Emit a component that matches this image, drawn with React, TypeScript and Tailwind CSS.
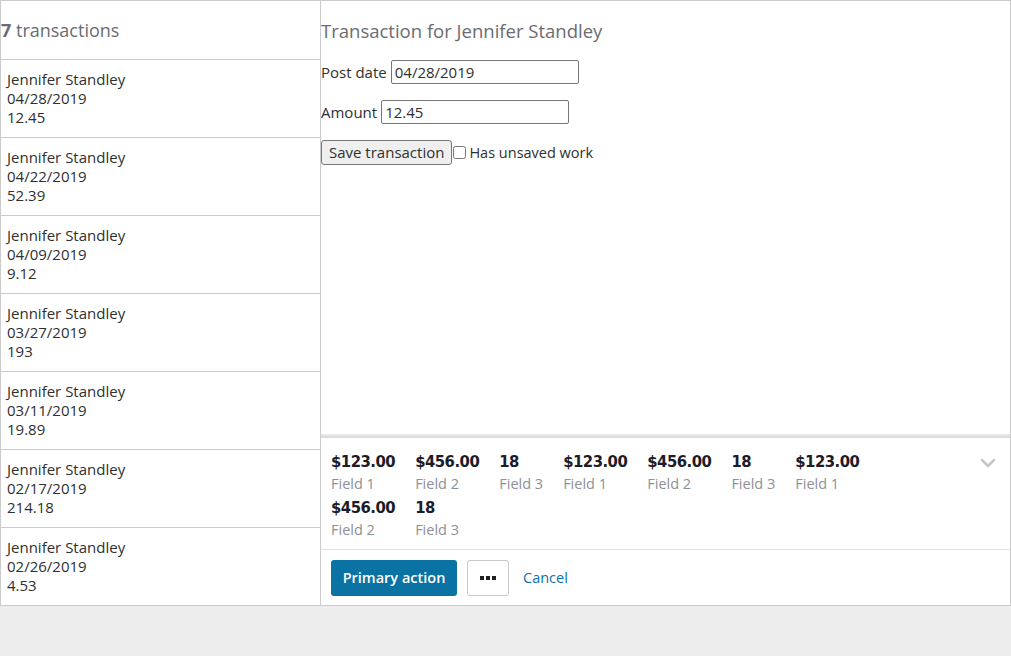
import React from 'react';

const transactions = [
  { name: 'Jennifer Standley', date: '04/28/2019', amount: '12.45' },
  { name: 'Jennifer Standley', date: '04/22/2019', amount: '52.39' },
  { name: 'Jennifer Standley', date: '04/09/2019', amount: '9.12' },
  { name: 'Jennifer Standley', date: '03/27/2019', amount: '193' },
  { name: 'Jennifer Standley', date: '03/11/2019', amount: '19.89' },
  { name: 'Jennifer Standley', date: '02/17/2019', amount: '214.18' },
  { name: 'Jennifer Standley', date: '02/26/2019', amount: '4.53' },
];

const summary = [
  { value: '$123.00', label: 'Field 1' },
  { value: '$456.00', label: 'Field 2' },
  { value: '18', label: 'Field 3' },
  { value: '$123.00', label: 'Field 1' },
  { value: '$456.00', label: 'Field 2' },
  { value: '18', label: 'Field 3' },
  { value: '$123.00', label: 'Field 1' },
  { value: '$456.00', label: 'Field 2' },
  { value: '18', label: 'Field 3' },
];

export default function App() {
  return (
    <div className="w-[1011px] h-[656px] bg-[#ededed] font-['Open_Sans','Noto_Sans',sans-serif] text-[#2f2f2f]">
      <div className="flex w-[1011px] h-[606px] border border-[#cbcbcb] bg-white">
        {/* transaction list */}
        <div className="flex flex-col w-[320px] border-r border-[#cbcbcb]">
          <div className="h-[59px] shrink-0 flex items-center border-b border-[#cbcbcb] text-[18px] text-[#6b6c72]">
            <span className="font-bold">7</span>&nbsp;transactions
          </div>
          {transactions.map((t, i) => (
            <div
              key={i}
              className={
                'shrink-0 px-[6px] pt-[10px] text-[15px] leading-[19px] ' +
                (i < transactions.length - 1 ? 'h-[78px] border-b border-[#cbcbcb]' : 'h-[77px]')
              }
            >
              <div>{t.name}</div>
              <div>{t.date}</div>
              <div>{t.amount}</div>
            </div>
          ))}
        </div>

        {/* detail */}
        <div className="flex flex-col flex-1">
          <div className="h-[59px] flex items-center text-[18.5px] text-[#6b6c72]">
            Transaction for Jennifer Standley
          </div>
          <div className="flex flex-col gap-[16px] text-[15px] text-[#2f2f2f]">
            <label className="flex items-center h-[24px]">
              Post date
              <input
                defaultValue="04/28/2019"
                className="ml-[4px] w-[188px] h-[24px] px-[3px] border border-[#767676] rounded-[2px] text-[15px] outline-none"
              />
            </label>
            <label className="flex items-center h-[24px]">
              Amount
              <input
                defaultValue="12.45"
                className="ml-[4px] w-[188px] h-[24px] px-[3px] border border-[#767676] rounded-[2px] text-[15px] outline-none"
              />
            </label>
            <div className="flex items-center h-[25px]">
              <button className="h-[25px] px-[7px] bg-[#efefef] border border-[#767676] rounded-[3px] text-[15px]">
                Save transaction
              </button>
              <input type="checkbox" className="ml-[1px] w-[13px] h-[13px]" />
              <span className="ml-[3px] text-[14.5px]">Has unsaved work</span>
            </div>
          </div>
          <div className="flex-1" />

          {/* summary footer */}
          <div className="h-[4px] bg-gradient-to-b from-[#eeeeee] to-[#d6d6d6]" />
          <div className="flex justify-between h-[112px] pl-[10px] pr-[14px] pt-[12px] border-b border-[#e2e2e2]">
            <div className="flex flex-wrap w-[600px] content-start">
              {summary.map((s, i) => (
                <div key={i} className="mr-[20px] h-[46px]">
                  <div className="font-['DejaVu_Sans_Condensed',sans-serif] font-bold text-[16.5px] leading-[23px] tracking-[-0.5px] text-[#1c1c28]">
                    {s.value}
                  </div>
                  <div className="text-[14.5px] leading-[22px] text-[#8d9096]">{s.label}</div>
                </div>
              ))}
            </div>
            <svg width="16" height="10" viewBox="0 0 16 10" className="mt-[8px]">
              <path d="M2 2 L8 8 L14 2" fill="none" stroke="#c6c6c6" strokeWidth="2.5" strokeLinecap="round" strokeLinejoin="round" />
            </svg>
          </div>
          <div className="flex items-center h-[55px] px-[10px] gap-[10px]">
            <button className="h-[36px] w-[126px] rounded-[3px] bg-[#0b73a3] text-white text-[14.5px] font-semibold">
              Primary action
            </button>
            <button className="h-[36px] w-[42px] flex items-center justify-center gap-[2px] rounded-[3px] border border-[#c9c9c9] bg-white">
              <span className="w-[4px] h-[4px] bg-[#222]" />
              <span className="w-[4px] h-[4px] bg-[#222]" />
              <span className="w-[4px] h-[4px] bg-[#222]" />
            </button>
            <span className="ml-[4px] text-[14.5px] text-[#0b73a3]">Cancel</span>
          </div>
        </div>
      </div>
    </div>
  );
}
